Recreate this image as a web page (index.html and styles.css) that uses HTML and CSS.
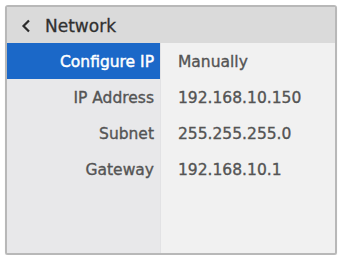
FILE: index.html
```html
<!DOCTYPE html>
<html>
<head>
<meta charset="utf-8">
<link rel="stylesheet" href="styles.css">
</head>
<body>
<div class="panel">
  <div class="header">
    <svg class="chev" width="10" height="14" viewBox="0 0 10 14"><path d="M8 1.5 L2.5 7 L8 12.5" fill="none" stroke="#2b2b2b" stroke-width="2.2"/></svg>
    <span class="title">Network</span>
  </div>
  <div class="body">
    <div class="labels">
      <div class="row label active">Configure IP</div>
      <div class="row label">IP Address</div>
      <div class="row label">Subnet</div>
      <div class="row label">Gateway</div>
    </div>
    <div class="values">
      <div class="row value">Manually</div>
      <div class="row value">192.168.10.150</div>
      <div class="row value">255.255.255.0</div>
      <div class="row value">192.168.10.1</div>
    </div>
  </div>
</div>
</body>
</html>
```
FILE: styles.css
```css
html, body {
  margin: 0;
  padding: 0;
  background: #ffffff;
}
body {
  font-family: "DejaVu Sans", Verdana, sans-serif;
}
.panel {
  box-sizing: border-box;
  margin: 5px 0 0 5px;
  width: 332px;
  height: 250px;
  border: 2px solid #b8b8b8;
  border-radius: 3px;
  background: #f1f1f1;
  display: flex;
  flex-direction: column;
  overflow: hidden;
  box-shadow: 0 1px 1px rgba(0,0,0,0.12);
}
.header {
  height: 36px;
  flex: none;
  background: #dadada;
  display: flex;
  align-items: center;
  padding-left: 14px;
  padding-top: 1px;
  box-sizing: border-box;
  gap: 14px;
}
.title {
  font-size: 17px;
  color: #303030;
  -webkit-text-stroke: 0.3px #303030;
}
.body {
  flex: 1;
  display: flex;
}
.labels {
  width: 153px;
  background: #e8e8ea;
  border-right: 1px solid #e2e2e4;
}
.values {
  flex: 1;
  background: #f1f1f1;
}
.row {
  height: 36px;
  display: flex;
  align-items: center;
  padding-top: 1px;
  box-sizing: border-box;
  font-size: 15.5px;
  color: #545454;
  -webkit-text-stroke: 0.35px #545454;
}
.label {
  justify-content: flex-end;
  padding-right: 6px;
}
.label.active {
  background: #1b68c8;
  color: #ffffff;
  -webkit-text-stroke: 0.45px #ffffff;
}
.value {
  padding-left: 17px;
}
```
